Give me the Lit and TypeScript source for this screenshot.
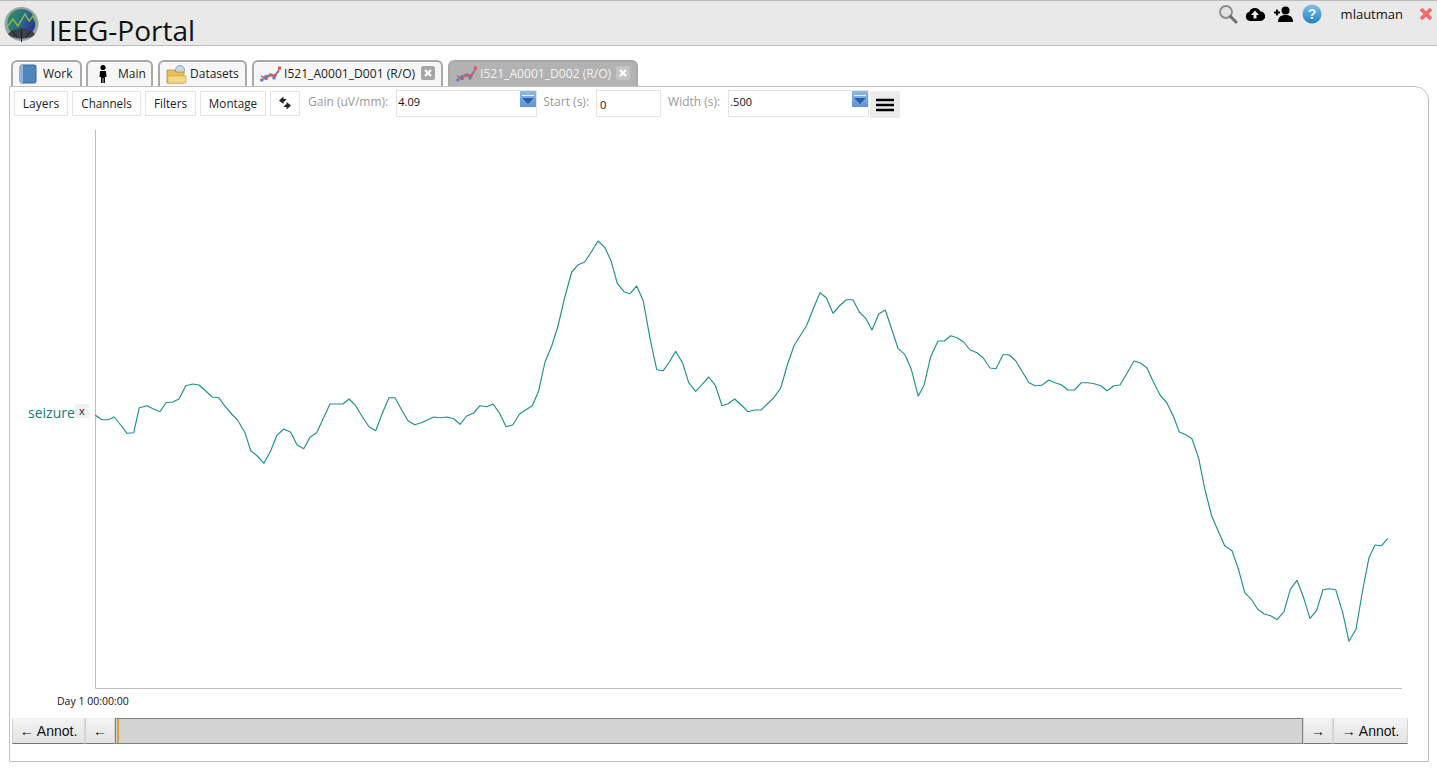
import { LitElement, html, css, svg } from "lit";
import { customElement } from "lit/decorators.js";

const TRACE =
  "95.3,415 101.7,419.7 108.3,419.7 114.3,417 120.7,425 127,433.3 133.7,432.7 139.3,407.7 147,405.7 153,408.7 160,411.7 166,402.7 172.7,402 179,399 185.7,385.7 192.7,384 199,385 205.7,391 212.3,397 218.7,397.7 225.3,406.7 231.7,414 238,420.7 245,432.7 250.7,450.7 257.3,456 264,463.3 270.7,450.7 276.7,435.7 283.7,429 290.7,432.3 297,444.7 303.7,448.7 310,437.3 316.7,432.7 323.3,418.3 330,404 336.7,404 343,404 349,399 355.7,405.7 362.3,416.7 369,426.7 375.7,430.7 382.3,413.3 389,397.7 395,397.7 401.7,410 408,420.7 414.7,424.7 421.3,422.7 427.3,420 433.7,417 440.3,417.7 447,417 453.7,418.7 460,424.3 466.7,416 473.7,413 480,405.7 486.7,406.7 493,404 499.7,413.3 506,426.7 512.7,425 519.3,414.3 526,409.7 532.3,405.7 538.7,390.7 545,362 551.7,346 557.7,327.3 564.3,299 571.7,272 578.3,264.7 584.7,262 591.3,252 598,241 604.7,247.3 611,260.7 617.3,283.3 624,291.7 630,293.7 636.7,286 643.3,301 650,338.3 656.7,369.7 663.3,370.7 669.3,362 675.7,351.3 682.7,363.3 688.7,382.7 695.7,391.3 702,384.7 708.7,377 715.3,385.3 722,405.7 728,403.7 734.7,399 741.3,405 748,411.7 754.3,410 761,410 767.3,404 774,397.3 780.7,388 787.3,365 794,345.7 800.7,335 806.7,325.3 813.3,308.7 820,292.7 826.3,297.7 833,313.3 839.3,306 846.3,299.7 853,299.7 859.3,312 866,318.7 872,330 878.7,314 885.3,310 891.7,329.3 898,348.3 905,354.7 911.3,369.3 918.2,396.2 924,385.3 930.7,356.7 938,341 944.3,341 950.7,335.7 957,337.7 963.7,342 970,350 977,352.7 983.3,358 990,368 996,368.7 1003,354.7 1009,354.7 1015.7,360.7 1022.3,371.7 1029,382.7 1035.3,385.7 1042,385.3 1048.7,380 1055,382.7 1061.3,384.7 1068,390 1074.7,390 1081.3,382.7 1087.7,382.7 1094.3,383.7 1101,385.7 1107,390.7 1114,385.7 1120,385 1127,373.3 1134,361 1140,362.7 1147,368 1153.3,381.7 1160,395 1166.7,402.7 1173.3,416 1179.3,432 1185.7,434.7 1192,438.7 1198.7,458.3 1205,490 1211.7,516 1218.3,531.3 1224.7,545.7 1232,550.7 1238.3,568.7 1244.7,592.7 1251.3,599.3 1257.7,609.3 1264.3,614 1270.7,615.7 1277,619.7 1284,611.7 1290.3,589.3 1297,580.3 1303.3,596.7 1310,618.3 1316.7,610.3 1323,589.7 1329.3,588.7 1335.7,589.7 1342.7,612.7 1349,641.3 1356,629.3 1362.7,590 1369,557.7 1375,545 1381.7,545.7 1387.7,538.3";

const traceIcon = html`<svg class="ticon" viewBox="0 0 21 18" width="21" height="18">
  <path d="M1 11 L6 13.5 L11 10 L15 10.5 L20 3" fill="none" stroke="#e05555" stroke-width="1.4" />
  <path d="M1 15.5 L6 12 L10 9 L14 12 L19 6" fill="none" stroke="#5b86c4" stroke-width="1.4" />
  <circle cx="6" cy="13.5" r="1.8" fill="#e05555" /><circle cx="11" cy="10" r="1.8" fill="#e05555" /><circle cx="15" cy="10.5" r="1.8" fill="#e05555" /><circle cx="19.5" cy="3" r="1.8" fill="#e05555" />
  <circle cx="1.8" cy="15" r="1.8" fill="#5b86c4" /><circle cx="6" cy="11.5" r="1.8" fill="#5b86c4" /><circle cx="14" cy="13" r="1.8" fill="#5b86c4" />
</svg>`;

const closeIcon = html`<svg class="close" viewBox="0 0 14 14" width="14" height="14">
  <rect width="14" height="14" rx="2.5" fill="#a6a6a6" />
  <path d="M4 4 L10 10 M10 4 L4 10" stroke="#fff" stroke-width="2.2" />
</svg>`;

const ddArrow = html`<svg class="dd" viewBox="0 0 16 16" width="16" height="16">
  <defs><linearGradient id="ddg" x1="0" y1="0" x2="0" y2="1"><stop offset="0" stop-color="#8fb8e8" /><stop offset="1" stop-color="#5d93d6" /></linearGradient></defs>
  <rect width="16" height="16" fill="url(#ddg)" />
  <rect x="2" y="4" width="12" height="1" fill="#e8f0fa" />
  <path d="M2 7 H14 L8 13 Z" fill="#2d5f9e" />
</svg>`;

@customElement("app-root")
export class AppRoot extends LitElement {
  static styles = css`
    :host {
      display: flex;
      flex-direction: column;
      height: 770px;
      width: 1437px;
      overflow: hidden;
      background: #fff;
      font-family: "Open Sans", sans-serif;
      color: #111;
    }
    .header {
      height: 44px;
      flex: none;
      display: flex;
      justify-content: space-between;
      align-items: flex-start;
      background: #e9e9e9;
      border-top: 1px solid #bdbdbd;
      border-bottom: 1px solid #bdbdbd;
    }
    .brand {
      display: flex;
      align-items: flex-start;
      padding-left: 4px;
    }
    .brand svg {
      margin-top: 5px;
      display: block;
    }
    .title {
      font-size: 28px;
      line-height: 36px;
      margin-left: 9px;
      margin-top: 11px;
      color: #111;
      white-space: nowrap;
    }
    .tools {
      display: flex;
      align-items: center;
      height: 26px;
      padding-right: 4px;
    }
    .tools svg {
      display: block;
    }
    .tools .user {
      font-size: 13px;
      color: #111;
      margin: 0 16px 0 19px;
    }
    .tool {
      margin-left: 9px;
    }
    .tool.cloud {
      margin-left: 7px;
    }
    .tabs {
      display: flex;
      height: 26px;
      margin-top: 14px;
      padding-left: 11px;
      flex: none;
    }
    .tab {
      display: flex;
      align-items: center;
      box-sizing: border-box;
      height: 27px;
      border: 2px solid #a9a9a9;
      border-bottom: none;
      border-radius: 6px 6px 0 0;
      background: #f7f7f7;
      font-size: 12px;
      color: #222;
      white-space: nowrap;
      padding: 0 0 2px 6px;
      margin-right: 5px;
    }
    .tab.work {
      width: 71px;
      margin-right: 4px;
    }
    .tab.main {
      width: 67px;
    }
    .tab.sets {
      width: 89px;
    }
    .tab.d1 {
      width: 191px;
      font-size: 12.1px;
    }
    .tab.d2 {
      width: 190px;
      font-size: 12.1px;
      background: #b2b2b2;
      color: #f4f4f4;
    }
    .tab .ticon {
      margin-right: 3px;
      flex: none;
    }
    .tab .close {
      margin-left: 6px;
      margin-bottom: 2px;
      flex: none;
    }
    .tab.d2 .close {
      margin-left: 5px;
    }
    .tab.d2 .close rect {
      fill: #c4c4c4;
    }
    .tab .ic {
      flex: none;
      margin-right: 6px;
    }
    .tab.sets .ic {
      margin-right: 3px;
    }
    .panel {
      flex: none;
      box-sizing: border-box;
      margin: 0 8px 0 9px;
      height: 676px;
      border: 1px solid #bfbfbf;
      border-radius: 0 14px 0 0;
      display: flex;
      flex-direction: column;
      background: #fff;
    }
    .toolbar {
      display: flex;
      align-items: flex-start;
      height: 33px;
      flex: none;
      padding: 3px 0 0 4px;
      box-sizing: border-box;
    }
    .btn {
      box-sizing: border-box;
      height: 25px;
      margin-top: 1px;
      margin-right: 4px;
      border: 1px solid #e4e4e4;
      background: #fff;
      font-size: 11.7px;
      color: #222;
      display: flex;
      align-items: center;
      justify-content: center;
      white-space: nowrap;
      padding-bottom: 1px;
    }
    .b-layers { width: 54px; font-size: 12px; padding-bottom: 0; }
    .b-channels { width: 69px; }
    .b-filters { width: 51px; }
    .b-montage { width: 66px; }
    .b-sync { width: 30px; }
    .lab {
      font-size: 12px;
      color: #999;
      line-height: 23px;
      white-space: nowrap;
      margin-left: 4px;
      margin-right: 8px;
    }
    .lab.start {
      margin-left: 6px;
      margin-right: 7px;
    }
    .lab.width {
      margin-left: 7px;
      margin-right: 8px;
    }
    .inp {
      box-sizing: border-box;
      border: 1px solid #e4e4e4;
      height: 27px;
      display: flex;
      justify-content: space-between;
      align-items: flex-start;
      font-size: 11px;
      color: #111;
      line-height: 21px;
      padding-left: 1px;
      background: #fff;
    }
    .inp.big {
      width: 141px;
    }
    .inp.small {
      width: 65px;
      padding: 3px 0 0 3px;
    }
    .inp .dd {
      display: block;
    }
    .menu {
      width: 30px;
      height: 27px;
      margin-top: 1px;
      margin-left: 1px;
      background: #ececec;
      display: flex;
      align-items: center;
      justify-content: center;
    }
    .chart {
      display: block;
      flex: none;
    }
    .label {
      font-family: "Open Sans", sans-serif;
      font-size: 14px;
      fill: #0d7c7c;
    }
    .x {
      font-family: "Open Sans", sans-serif;
      font-size: 11px;
      fill: #222;
    }
    .day {
      font-family: "Open Sans", sans-serif;
      font-size: 10.5px;
      fill: #111;
    }
    .scrollbar {
      display: flex;
      height: 26px;
      flex: none;
      margin: 0 20px 0 2px;
    }
    .sb {
      box-sizing: border-box;
      background: linear-gradient(#f4f4f4, #e2e2e2);
      border: 1px solid #d4d4d4;
      border-bottom: 1px solid #777;
      border-top-color: #efefef;
      font-family: "Liberation Sans", sans-serif;
      font-size: 14px;
      color: #111;
      display: flex;
      align-items: center;
      justify-content: center;
      white-space: nowrap;
    }
    .sb.annot-l {
      width: 73px;
    }
    .sb.annot-r {
      width: 75px;
    }
    .sb.arrow {
      width: 30px;
    }
    .track {
      flex: 1;
      box-sizing: border-box;
      background: #d3d3d3;
      border: 1px solid #7f7f7f;
      display: flex;
    }
    .handle {
      width: 2px;
      background: #e0a030;
      margin-left: 1px;
    }
  `;

  render() {
    return html`
      <div class="header">
        <div class="brand">
          <svg viewBox="0 0 36 36" width="36" height="36">
            <defs>
              <linearGradient id="lg" x1="0" y1="0" x2="1" y2="0.6">
                <stop offset="0" stop-color="#2f9a4e" />
                <stop offset="0.55" stop-color="#2a6a8a" />
                <stop offset="1" stop-color="#2a3592" />
              </linearGradient>
            </defs>
            <circle cx="17.5" cy="18" r="17" fill="#9aa5a5" />
            <circle cx="17.5" cy="17" r="14" fill="url(#lg)" />
            <path d="M4 28 C10 21 25 21 31 28 C27 34 8 34 4 28 Z" fill="#3b4148" />
            <path d="M17.5 23 V36 M8 25 L13 31 M27 25 L22 31" stroke="#1c1c1c" stroke-width="1" fill="none" />
            <path d="M3 21 L9 13 L14 20 L21 8 L25 15 L29 10 L33 19" stroke="#86b84a" stroke-width="1.5" fill="none" />
          </svg>
          <div class="title">IEEG-Portal</div>
        </div>
        <div class="tools">
          <svg class="tool" viewBox="0 0 20 20" width="20" height="20">
            <circle cx="8" cy="8" r="6" fill="#e2e2e2" stroke="#8a8a8a" stroke-width="1.8" />
            <path d="M12.5 12.5 L18 18" stroke="#6f6f6f" stroke-width="3" stroke-linecap="round" />
          </svg>
          <svg class="tool cloud" viewBox="0 0 20 14" width="20" height="14">
            <path d="M5 14 A4.6 4.6 0 0 1 4.2 5 A6 6 0 0 1 15.4 4.6 A4.7 4.7 0 0 1 15.5 14 Z" fill="#000" />
            <path d="M10 3.5 L14 8 H11.5 V11.5 H8.5 V8 H6 Z" fill="#e9e9e9" />
          </svg>
          <svg class="tool" viewBox="0 0 19 16" width="19" height="16">
            <circle cx="11.5" cy="4.5" r="4" fill="#000" />
            <path d="M4 16 C4 10 8 9 11.5 9 C15 9 19 10 19 16 Z" fill="#000" />
            <path d="M0 6.5 H6 M3 3.5 V9.5" stroke="#000" stroke-width="1.8" />
          </svg>
          <svg class="tool" viewBox="0 0 20 20" width="20" height="20">
            <defs><linearGradient id="hg" x1="0" y1="0" x2="0" y2="1"><stop offset="0" stop-color="#7cc0ec" /><stop offset="1" stop-color="#2481bf" /></linearGradient></defs>
            <circle cx="10" cy="10" r="9.5" fill="url(#hg)" />
            <text x="10" y="15" text-anchor="middle" font-family="Liberation Sans, sans-serif" font-weight="700" font-size="14" fill="#e8f4fc">?</text>
          </svg>
          <span class="user">mlautman</span>
          <svg viewBox="0 0 14 14" width="14" height="14">
            <path d="M2 2 L12 12 M12 2 L2 12" stroke="#f46a6a" stroke-width="3.8" />
          </svg>
        </div>
      </div>
      <div class="tabs">
        <div class="tab work">
          <svg class="ic" viewBox="0 0 18 20" width="18" height="20">
            <rect x="1" y="1" width="16" height="18" rx="1.5" fill="#4f86bd" stroke="#3a6591" />
            <rect x="1" y="1" width="3" height="18" fill="#8fb3d6" />
          </svg>
          Work
        </div>
        <div class="tab main">
          <svg class="ic" viewBox="0 0 18 20" width="18" height="20">
            <circle cx="9" cy="3.5" r="2.6" fill="#000" />
            <path d="M6 7 H12 L12.5 13 H11 L11 19 H9.4 V14 H8.6 V19 H7 L7 13 H5.5 Z" fill="#000" />
          </svg>
          Main
        </div>
        <div class="tab sets">
          <svg class="ic" viewBox="0 0 21 20" width="21" height="20">
            <circle cx="14" cy="6" r="4.5" fill="#c6d9ea" stroke="#8ca3b8" />
            <path d="M1 6 H8 L10 8 H18 V19 H1 Z" fill="#eabf5a" stroke="#b98f33" stroke-width="0.8" />
            <rect x="2" y="12" width="18" height="7" fill="#f5d98a" stroke="#c59c40" stroke-width="0.6" />
          </svg>
          Datasets
        </div>
        <div class="tab d1">${traceIcon}I521_A0001_D001 (R/O)${closeIcon}</div>
        <div class="tab d2">${traceIcon}I521_A0001_D002 (R/O)${closeIcon}</div>
      </div>
      <div class="panel">
        <div class="toolbar">
          <div class="btn b-layers">Layers</div>
          <div class="btn b-channels">Channels</div>
          <div class="btn b-filters">Filters</div>
          <div class="btn b-montage">Montage</div>
          <div class="btn b-sync">
            <svg viewBox="0 0 14 14" width="14" height="14">
              <path d="M1 4.5 L5.5 0.5 V3 H8.5 L6.5 5.5 H5.5 V8 Z" fill="#222" />
              <path d="M13 9.5 L8.5 13.5 V11 H5.5 L7.5 8.5 H8.5 V6 Z" fill="#222" />
            </svg>
          </div>
          <span class="lab">Gain (uV/mm):</span>
          <div class="inp big">4.09${ddArrow}</div>
          <span class="lab start">Start (s):</span>
          <div class="inp small">0</div>
          <span class="lab width">Width (s):</span>
          <div class="inp big">.500${ddArrow}</div>
          <div class="menu">
            <svg viewBox="0 0 18 14" width="18" height="14">
              <path d="M0 2 H18 M0 7 H18 M0 12 H18" stroke="#000" stroke-width="2.4" />
            </svg>
          </div>
        </div>
        <svg class="chart" viewBox="10 120 1418 598" width="1418" height="598">
          ${svg`
            <path d="M95.5 130 V688.5 H1402" fill="none" stroke="#bdbdbd" stroke-width="1" />
            <polyline points=${TRACE} fill="none" stroke="#1f8f8f" stroke-width="1.15" stroke-linejoin="round" />
            <text class="label" x="28" y="418">seizure</text>
            <rect x="75" y="404" width="14" height="14" fill="#f0f0f0" />
            <text class="x" x="79" y="415">x</text>
            <text class="day" x="57" y="705">Day 1 00:00:00</text>
          `}
        </svg>
        <div class="scrollbar">
          <div class="sb annot-l">← Annot.</div>
          <div class="sb arrow">←</div>
          <div class="track"><div class="handle"></div></div>
          <div class="sb arrow">→</div>
          <div class="sb annot-r">→ Annot.</div>
        </div>
      </div>
    `;
  }
}
